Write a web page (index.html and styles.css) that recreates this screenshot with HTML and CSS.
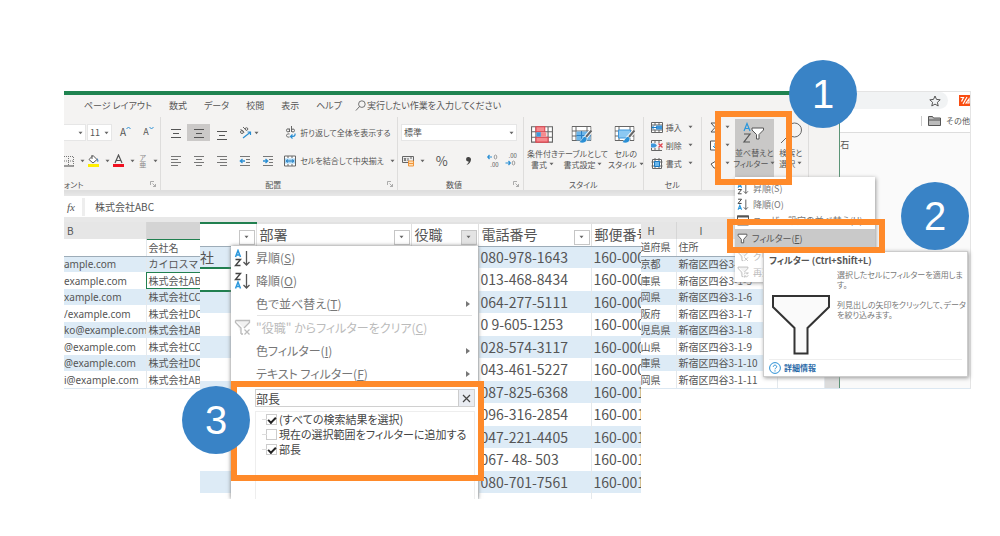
FILE: index.html
```html
<!DOCTYPE html>
<html lang="ja">
<head>
<meta charset="utf-8">
<title>フィルターの設定手順</title>
<link rel="stylesheet" href="styles.css">
</head>
<body>
<svg class="defs" aria-hidden="true">
  <symbol id="caret" viewBox="0 0 5 4"><path d="M.5 .8h4L2.5 3.3z" fill="#666"/></symbol>
  <symbol id="launch" viewBox="0 0 6 6"><path d="M.5 4V.5H4M2.5 2.5l3 3M5.5 3v2.5H3" fill="none" stroke="#999" stroke-width=".8"/></symbol>
  <symbol id="lines" viewBox="0 0 12 12"><path d="M1 2.500h10M3 6.500h6M1 10.500h10" stroke="#555" fill="none"/></symbol>
  <symbol id="left" viewBox="0 0 12 12"><path d="M1 1.500h10M1 4.500h7M1 7.500h10M1 10.500h7" stroke="#777" fill="none"/></symbol>
  <symbol id="center" viewBox="0 0 12 12"><path d="M1 1.500h10M3 4.500h6M1 7.500h10M3 10.500h6" stroke="#777" fill="none"/></symbol>
  <symbol id="right" viewBox="0 0 12 12"><path d="M1 1.500h10M4 4.500h7M1 7.500h10M4 10.500h7" stroke="#777" fill="none"/></symbol>
  <symbol id="outdent" viewBox="0 0 12 12"><path d="M1 1.500h10M7 4.500h4M7 7.500h4M1 10.500h10" stroke="#777" fill="none"/><path d="M6 6H1.500M3.500 4L1.300 6l2.200 2" stroke="#2a8fd4" fill="none" stroke-width="1.300"/></symbol>
  <symbol id="indent" viewBox="0 0 12 12"><path d="M1 1.500h10M7 4.500h4M7 7.500h4M1 10.500h10" stroke="#777" fill="none"/><path d="M1 6h4.500M3.500 4l2.200 2-2.200 2" stroke="#2a8fd4" fill="none" stroke-width="1.300"/></symbol>
  <symbol id="sortasc" viewBox="0 0 17 18"><path d="M1.500 8L4 1.500 6.500 8M2.300 6h3.400" stroke="#2a97dc" stroke-width="1.500" fill="none"/><path d="M1.500 10.500h5l-5 6h5" stroke="#444" stroke-width="1.400" fill="none"/><path d="M12.500 2v14M9.500 13l3 3 3-3" stroke="#555" stroke-width="1.300" fill="none"/></symbol>
  <symbol id="sortdesc" viewBox="0 0 17 18"><path d="M1.500 1.500h5l-5 6h5" stroke="#444" stroke-width="1.400" fill="none"/><path d="M1.500 16.500L4 10l2.500 6.500M2.300 14.500h3.400" stroke="#2a97dc" stroke-width="1.500" fill="none"/><path d="M12.500 2v14M9.500 13l3 3 3-3" stroke="#555" stroke-width="1.300" fill="none"/></symbol>
  <symbol id="funnel" viewBox="0 0 14 14"><path d="M1.500 1.500h11v2L8.500 8v4.500h-3V8l-4-4.500z" stroke="#555" fill="#fff" stroke-width="1.200"/></symbol>
  <symbol id="clear" viewBox="0 0 17 17"><path d="M1.500 1.500h14v2L10 9M7 15V9L1.500 3.500v-2M7 15h2" stroke="#bbb" fill="#f2f2f2" stroke-width="1.300"/><path d="M10.500 10.500l5 5M15.500 10.500l-5 5" stroke="#bbb" stroke-width="1.200"/></symbol>
  <symbol id="reapply" viewBox="0 0 17 17"><path d="M1.500 1.500h14v2L10 9M7 15V9L1.500 3.500v-2M7 15h2" stroke="#bbb" fill="#f2f2f2" stroke-width="1.300"/><path d="M10 12a3 3 0 0 1 5-1.500M15.500 8.500v2.500H13M16 13a3 3 0 0 1-5 1.500M10.500 16.500V14H13" stroke="#bbb" fill="none" stroke-width="1.100"/></symbol>
  <symbol id="find" viewBox="0 0 12 12"><circle cx="7.500" cy="4.500" r="3.600" fill="none" stroke="#666"/><path d="M5 7L1 11.500" stroke="#666"/></symbol>
  <symbol id="grid" viewBox="0 0 20 18"><path d="M.5 1.500h19v14H.5zM.5 6h19M.5 11h19M4.500 1.500v14M15.500 1.500v14" fill="#fff" stroke="#666"/></symbol>
  <symbol id="brush" viewBox="0 0 20 20"><path d="M18.500 5.500L12 13" stroke="#fff" stroke-width="4"/><path d="M18.500 5.500L12.500 12.500" stroke="#666" stroke-width="2"/><path d="M12.500 11.500c-3-.5-3.500 4-6.500 5.500 3 2 8 1 8-3.500z" fill="#2a8fd4" stroke="#fff" stroke-width=".6"/></symbol>
</svg>
<main class="canvas">
  <section class="shot">
    <div class="excel">
      <nav class="tabs">
        <a href="#">ページ レイアウト</a><a href="#">数式</a><a href="#">データ</a><a href="#">校閲</a><a href="#">表示</a><a href="#">ヘルプ</a>
        <a href="#" class="tell"><svg width="11" height="11"><use href="#find"/></svg>実行したい作業を入力してください</a>
      </nav>
      <div class="ribbon">
        <div class="group g-font">
          <div class="row">
            <button class="box stub" aria-label="フォント"><svg class="c"><use href="#caret"/></svg></button>
            <button class="box size">11<svg class="c"><use href="#caret"/></svg></button>
            <button class="tool big-a">A<svg width="5" height="4" viewBox="0 0 5 4"><path d="M.5 3L2.500 1l2 2" stroke="#2a8fd4" fill="none"/></svg></button>
            <button class="tool small-a">A<svg width="5" height="4" viewBox="0 0 5 4"><path d="M.5 1L2.500 3l2-2" stroke="#2a8fd4" fill="none"/></svg></button>
          </div>
          <div class="row">
            <button class="tool duo first" aria-label="罫線"><svg width="11" height="12" viewBox="0 0 11 12"><path d="M0 1.500h9.500v9M0 6h9.500M4.500 1v10" stroke="#777" stroke-dasharray="1 1" fill="none"/><path d="M0 11h10" stroke="#444"/></svg><svg class="c"><use href="#caret"/></svg></button>
            <button class="tool duo" aria-label="塗りつぶし"><svg width="13" height="13" viewBox="0 0 13 13"><path d="M2 5.500L6 1.500l4 4-4 3.500zM5 1v4" stroke="#555" fill="#fff"/><path d="M10 4c2 2 1.500 4 .5 4z" fill="#2a6fb4"/><path d="M1 10h11v3H1z" fill="#ffee00"/></svg><svg class="c"><use href="#caret"/></svg></button>
            <button class="tool duo" aria-label="文字色"><svg width="13" height="13" viewBox="0 0 13 13"><path d="M3 9l3.500-8L10 9M4.200 6.500h4.600" stroke="#555" fill="none" stroke-width="1.200"/><path d="M1 10h11v3H1z" fill="#f01020"/></svg><svg class="c"><use href="#caret"/></svg></button>
            <button class="tool duo ruby"><span>ア<br>亜</span><svg class="c"><use href="#caret"/></svg></button>
          </div>
          <div class="label">ォント<svg class="l"><use href="#launch"/></svg></div>
        </div>
        <div class="group g-align">
          <div class="row">
            <button class="tool" aria-label="上揃え"><svg width="12" height="12"><use href="#lines"/></svg></button>
            <button class="tool on" aria-label="中央揃え"><svg width="12" height="12"><use href="#lines"/></svg></button>
            <button class="tool low" aria-label="下揃え"><svg width="12" height="12"><use href="#lines"/></svg></button>
            <button class="tool turn" aria-label="方向"><svg width="13" height="13" viewBox="0 0 13 13"><circle cx="3" cy="6" r="1.500" stroke="#666" fill="none"/><path d="M1.500 3l3.500 3.500M4 1l3.500 3.500" stroke="#666"/><circle cx="7.500" cy="3" r="1.300" stroke="#666" fill="none"/><path d="M4 12l7-5.500M11.500 9V6H8.500" stroke="#2a8fd4" fill="none" stroke-width="1.200"/></svg><svg class="c"><use href="#caret"/></svg></button>
            <button class="tool wide wrap"><svg width="11" height="13" viewBox="0 0 11 13"><path d="M4.500 2.500v3.500M4.500 4.500a1.500 1.500 0 1 1-3-.2 1.500 1.500 0 0 1 3 0M6.500 0v6M6.500 4.500a1.500 1.500 0 1 0 3 0 1.500 1.500 0 0 0-3 0M4.500 8c-4-1-4 4 0 3" stroke="#666" fill="none"/><path d="M10 7.500c.5 3-1.500 3-4 3M7.500 8.500l-2 2 2 2" stroke="#2a8fd4" fill="none" stroke-width="1.200"/></svg>折り返して全体を表示する</button>
          </div>
          <div class="row">
            <button class="tool" aria-label="左揃え"><svg width="12" height="12"><use href="#left"/></svg></button>
            <button class="tool" aria-label="中央"><svg width="12" height="12"><use href="#center"/></svg></button>
            <button class="tool" aria-label="右揃え"><svg width="12" height="12"><use href="#right"/></svg></button>
            <button class="tool" aria-label="インデントを減らす"><svg width="12" height="12"><use href="#outdent"/></svg></button>
            <button class="tool" aria-label="インデントを増やす"><svg width="12" height="12"><use href="#indent"/></svg></button>
            <button class="tool wide"><svg width="12" height="12" viewBox="0 0 12 12"><path d="M.5 1h11v10H.5zM4 1v2M8 1v2M4 9v2M8 9v2" stroke="#666" fill="#fff"/><path d="M1 3.500h10v5H1z" fill="#a9d5f2"/><path d="M2 6h8M4 4.500L2.300 6 4 7.500M8 4.500L9.700 6 8 7.500" stroke="#1878c0" fill="none"/></svg>セルを結合して中央揃え<svg class="c far"><use href="#caret"/></svg></button>
          </div>
          <div class="label">配置<svg class="l"><use href="#launch"/></svg></div>
        </div>
        <div class="group g-num">
          <div class="row"><button class="box format">標準<svg class="c"><use href="#caret"/></svg></button></div>
          <div class="row spread">
            <button class="tool duo" aria-label="通貨"><svg width="13" height="12" viewBox="0 0 13 12"><path d="M.5 1.500h11v6H.5z" stroke="#666" fill="#eee"/><path d="M2 3l2 3M4 3L2 6M6 3v3M8 3h2" stroke="#666"/><path d="M6.500 6h5v5h-5zM6.500 8.500h5" stroke="#f0953a" fill="#ffe0b8"/></svg><svg class="c"><use href="#caret"/></svg></button>
            <button class="tool pct">%</button>
            <button class="tool pct comma" aria-label="桁区切り"><svg width="7" height="10" viewBox="0 0 7 10"><path d="M3.500 1a2.200 2.200 0 0 0-.5 4.400c.8 0 .8.300.5 1L1.500 9C4 8.500 6 6 6 3.500 6 2 5 1 3.500 1z" fill="#444"/></svg></button>
            <button class="tool dec">.00<svg width="11" height="12" viewBox="0 0 11 12"><path d="M5 3H.8M2.500 1L.8 3l1.700 2" stroke="#2a8fd4" fill="none" stroke-width="1.200"/><ellipse cx="8.500" cy="3" rx="1.300" ry="2" stroke="#888" fill="none" stroke-width=".8"/></svg></button>
            <button class="tool dec up">.00<svg width="11" height="12" viewBox="0 0 11 12"><path d="M.5 9h4.700M3.500 7l1.800 2-1.800 2" stroke="#2a8fd4" fill="none" stroke-width="1.200"/><ellipse cx="8.500" cy="9" rx="1.300" ry="2" stroke="#888" fill="none" stroke-width=".8"/></svg></button>
          </div>
          <div class="label">数値<svg class="l"><use href="#launch"/></svg></div>
        </div>
        <div class="group g-style">
          <div class="tall-row">
            <button class="tall"><svg width="22" height="20" viewBox="0 0 20 18"><use href="#grid" width="20" height="18"/><path d="M4.500 1.500h8V6h-8zM4.500 11h11v4.500h-11z" fill="#f58b8f" stroke="#e04550"/><path d="M5 6.500h4v4H5z" fill="#3d97dc"/><path d="M9 6.500h5v4H9z" fill="#f58b8f"/></svg><span>条件付き<br>書式 <svg class="c"><use href="#caret"/></svg></span></button>
            <button class="tall"><svg width="23" height="20" viewBox="0 0 22 20"><use href="#grid" width="20" height="18"/><path d="M5 6.500h14v9H5z" fill="#6cb6ea"/><path d="M5 10.500h14M10 6v9" stroke="#2a7fc4"/><use href="#brush" x="1" width="21" height="20"/></svg><span>テーブルとして<br>書式設定 <svg class="c"><use href="#caret"/></svg></span></button>
            <button class="tall"><svg width="23" height="20" viewBox="0 0 22 20"><use href="#grid" width="20" height="18"/><path d="M4 5h12v8H4z" fill="#8cc8f2" stroke="#3d97dc"/><use href="#brush" x="1" width="21" height="20"/></svg><span>セルの<br>スタイル <svg class="c"><use href="#caret"/></svg></span></button>
          </div>
          <div class="label">スタイル</div>
        </div>
        <div class="group g-cell">
          <div class="stack">
            <button class="item"><svg width="12" height="11" viewBox="0 0 12 11"><path d="M.5.5h11v10H.5zM.5 3h11M.5 8h11M4 .5V3M8 .5V3M4 8v2.500M8 8v2.500" stroke="#666" fill="#fff"/><path d="M5 3.500h6v4H5z" fill="#3d97dc"/><path d="M1 5.500h5M3 3.500l-2 2 2 2" stroke="#1878c0" fill="none"/></svg>挿入<svg class="c"><use href="#caret"/></svg></button>
            <button class="item"><svg width="12" height="11" viewBox="0 0 12 11"><path d="M11 .5H.5V3M.5 8v2.500H11M4 .5V3M4 8v2.500M8 8v2.500M8 .5V3" stroke="#666" fill="none"/><path d="M0 3.500h4l2 2-2 2H0z" fill="#3d97dc"/><path d="M7.500 3.500l4 4M11.500 3.500l-4 4" stroke="#e04550" stroke-width="1.300"/></svg>削除<svg class="c"><use href="#caret"/></svg></button>
            <button class="item"><svg width="12" height="11" viewBox="0 0 12 11"><path d="M1.500 1.500h9v9h-9zM.5 4h11M.5 8h11M4 0v11M8 0v11" stroke="#666" fill="#fff"/><path d="M3.500 3.500h5v5h-5z" fill="#6cb6ea" stroke="#1878c0"/></svg>書式<svg class="c"><use href="#caret"/></svg></button>
          </div>
          <div class="label">セル</div>
        </div>
        <div class="group g-edit">
          <div class="edit-row">
            <div class="stack sums">
              <button class="item" aria-label="合計"><svg width="9" height="11" viewBox="0 0 9 11"><path d="M8.500 1H1l4 4.500L1 10h7.500" stroke="#555" fill="none"/></svg><svg class="c"><use href="#caret"/></svg></button>
              <button class="item" aria-label="フィル"><svg width="9" height="11" viewBox="0 0 9 11"><path d="M8.500 1h-8v9h8" stroke="#555" fill="#fff"/><path d="M5 3v5M3 6l2 2 2-2" stroke="#2a8fd4" fill="none"/></svg><svg class="c"><use href="#caret"/></svg></button>
              <button class="item" aria-label="クリア"><svg width="9" height="11" viewBox="0 0 9 11"><path d="M8.500 1.500L1 6l3 4h4.500" stroke="#555" fill="#fff"/></svg><svg class="c"><use href="#caret"/></svg></button>
            </div>
            <button class="tall sort"><svg width="24" height="22" viewBox="0 0 24 22"><path d="M2 9L5 1.500 8 9M3 6.500h4" stroke="#2a97dc" fill="none" stroke-width="1.200"/><path d="M2 12h6l-6 8h6" stroke="#555" fill="none" stroke-width="1.200"/><path d="M10 6h11.500v2l-4.500 4.500V17h-2.500v-4.500L10 8z" stroke="#555" fill="#fff"/></svg><span>並べ替えと<br>フィルター <svg class="c"><use href="#caret"/></svg></span></button>
            <button class="tall seek"><svg width="24" height="22" viewBox="0 0 24 22"><circle cx="15.500" cy="8" r="7" stroke="#666" fill="none"/><path d="M10 13l-8 8" stroke="#666"/></svg><span>検索と<br>選択 <svg class="c"><use href="#caret"/></svg></span></button>
          </div>
        </div>
        <div class="group g-rest"></div>
      </div>
      <div class="formula"><i class="fx">fx</i><input aria-label="数式バー" value="株式会社ABC"></div>
      <div class="sheet">
        <table class="base">
          <colgroup><col class="k-b"><col class="k-c"><col class="k-h"><col class="k-i"><col></colgroup>
          <thead><tr><th>B</th><th class="picked"></th><th class="h">H</th><th class="i">I</th><th></th></tr></thead>
          <tbody>
            <tr class="names"><td></td><td>会社名</td><td>道府県</td><td>住所</td><td></td></tr>
            <tr><td>ample.com</td><td>カイロスマ</td><td>京都</td><td>新宿区四谷3-1-4</td><td></td></tr>
            <tr><td>example.com</td><td class="active">株式会社ABC</td><td>庫県</td><td>新宿区四谷3-1-5</td><td></td></tr>
            <tr><td>xample.com</td><td>株式会社CCC</td><td>岡県</td><td>新宿区四谷3-1-6</td><td></td></tr>
            <tr><td>/example.com</td><td>株式会社DCC</td><td>阪府</td><td>新宿区四谷3-1-7</td><td></td></tr>
            <tr><td>ko@example.com</td><td>株式会社ABC</td><td>児島県</td><td>新宿区四谷3-1-8</td><td></td></tr>
            <tr><td>@example.com</td><td>株式会社CCC</td><td>山県</td><td>新宿区四谷3-1-9</td><td></td></tr>
            <tr><td>@example.com</td><td>株式会社DCC</td><td>庫県</td><td>新宿区四谷3-1-10</td><td></td></tr>
            <tr><td>i@example.com</td><td>株式会社ABC</td><td>岡県</td><td>新宿区四谷3-1-11</td><td></td></tr>
          </tbody>
        </table>
        <div class="scroll"></div>
      </div>
    </div>
    <div class="browser">
      <div class="omni"><div class="pill"><svg width="12" height="12" viewBox="0 0 12 12"><path d="M6 1l1.500 3.400 3.700.4-2.800 2.500.8 3.700L6 9.100 2.800 11l.8-3.700L.8 4.800l3.700-.4z" stroke="#555" fill="none"/></svg></div><svg class="ext" width="11" height="11" viewBox="0 0 11 11"><path d="M0 0h11v11H0z" fill="#f94d12"/><path d="M1.500 2.500h3l-2 4M8 2L4 9M7 8l3-4v4z" stroke="#fff" fill="none" stroke-width="1.200"/></svg></div>
      <div class="marks"><svg width="13" height="10" viewBox="0 0 13 10"><path d="M.5 9.500V.5h4l1 1.500h7v7.500zM.5 4h12" stroke="#555" fill="#bbb"/></svg>その他</div>
      <div class="page">石</div>
    </div>
  </section>

  <section class="zoomed">
    <table class="contacts">
      <colgroup><col class="z-a"><col class="z-b"><col class="z-c"><col class="z-d"><col class="z-e"></colgroup>
      <thead><tr>
        <th class="picked"><button class="drop" aria-label="絞り込み"><svg class="c"><use href="#caret"/></svg></button></th>
        <th>部署<button class="drop" aria-label="部署の絞り込み"><svg class="c"><use href="#caret"/></svg></button></th>
        <th>役職<button class="drop open" aria-label="役職の絞り込み"><svg class="c"><use href="#caret"/></svg></button></th>
        <th>電話番号<button class="drop" aria-label="電話番号の絞り込み"><svg class="c"><use href="#caret"/></svg></button></th>
        <th>郵便番号</th></tr></thead>
      <tbody>
        <tr><td>社</td><td></td><td></td><td>080-978-1643</td><td>160-0004</td></tr>
        <tr><td class="active"></td><td></td><td></td><td>013-468-8434</td><td>160-0004</td></tr>
        <tr><td></td><td></td><td></td><td>064-277-5111</td><td>160-0004</td></tr>
        <tr><td></td><td></td><td></td><td>0 9-605-1253</td><td>160-0004</td></tr>
        <tr><td></td><td></td><td></td><td>028-574-3117</td><td>160-0004</td></tr>
        <tr><td></td><td></td><td></td><td>043-461-5227</td><td>160-0004</td></tr>
        <tr><td></td><td></td><td></td><td>087-825-6368</td><td>160-0015</td></tr>
        <tr><td></td><td></td><td></td><td>096-316-2854</td><td>160-0015</td></tr>
        <tr><td></td><td></td><td></td><td>047-221-4405</td><td>160-0015</td></tr>
        <tr><td></td><td></td><td></td><td>067- 48- 503</td><td>160-0015</td></tr>
        <tr><td></td><td></td><td></td><td>080-701-7561</td><td>160-0015</td></tr>
        <tr><td></td><td></td><td></td><td>087-65-8767</td><td>160-0015</td></tr>
      </tbody>
    </table>
    <div class="menu">
      <button><svg width="17" height="18"><use href="#sortasc"/></svg><span>昇順(<u>S</u>)</span></button>
      <button><svg width="17" height="18"><use href="#sortdesc"/></svg><span>降順(<u>O</u>)</span></button>
      <button><span>色で並べ替え(<u>T</u>)</span><i class="more"></i></button>
      <hr>
      <button disabled><svg width="17" height="17"><use href="#clear"/></svg><span>"役職" からフィルターをクリア(<u>C</u>)</span></button>
      <button><span>色フィルター(<u>I</u>)</span><i class="more"></i></button>
      <button><span>テキスト フィルター(<u>F</u>)</span><i class="more"></i></button>
      <div class="search"><input aria-label="検索" value="部長"><button aria-label="クリア"><svg width="9" height="9" viewBox="0 0 9 9"><path d="M1 1l7 7M8 1L1 8" stroke="#444" stroke-width="1.200"/></svg></button></div>
      <div class="tree">
        <label><input type="checkbox" checked>(すべての検索結果を選択)</label>
        <label><input type="checkbox">現在の選択範囲をフィルターに追加する</label>
        <label><input type="checkbox" checked>部長</label>
      </div>
    </div>
  </section>

  <div class="popup">
    <button><svg width="12" height="13"><use href="#sortasc"/></svg>昇順(S)</button>
    <button><svg width="12" height="13"><use href="#sortdesc"/></svg>降順(O)</button>
    <button><svg width="12" height="12" viewBox="0 0 12 12"><path d="M.5 2h11v9H.5z" stroke="#555" fill="#fff"/><path d="M0 2.500h12" stroke="#555" stroke-width="2"/></svg>ユーザー設定の並べ替え(U)...</button>
    <button class="hot"><svg width="11" height="11"><use href="#funnel"/></svg><span>フィルター(<u>F</u>)</span></button>
    <button disabled><svg width="12" height="12"><use href="#clear"/></svg>クリア(C)</button>
    <button disabled><svg width="12" height="12"><use href="#reapply"/></svg>再適用(Y)</button>
  </div>
  <div class="tip">
    <strong>フィルター (Ctrl+Shift+L)</strong>
    <div class="tip-body">
      <svg width="60" height="62" viewBox="0 0 60 62"><path d="M2 2h56v11L36.500 34v25.500h-13V34L2 13z" fill="#fafafa" stroke="#333" stroke-width="2"/></svg>
      <div><p>選択したセルにフィルターを適用しま<br>す。</p><p>列見出しの矢印をクリックして、データ<br>を絞り込みます。</p></div>
    </div>
    <a href="#"><svg width="12" height="12" viewBox="0 0 12 12"><circle cx="6" cy="6" r="5.400" fill="#fff" stroke="#2a8fd4"/><path d="M4.300 4.800c0-2.200 3.400-2.200 3.400 0 0 1.200-1.700 1.200-1.700 2.500M6 8.300v1.200" stroke="#2a8fd4" fill="none"/></svg>詳細情報</a>
  </div>

  <div class="frame f1"></div>
  <div class="frame f2"></div>
  <div class="frame f3"></div>
  <div class="step s1">1</div>
  <div class="step s2">2</div>
  <div class="step s3">3</div>
</main>
</body>
</html>
```
FILE: styles.css
```css
* { box-sizing: border-box; }
body { margin: 0; background: #fff; color: #555; font: 9px/11px "Noto Sans CJK JP", sans-serif; }
button, input { font: inherit; color: inherit; margin: 0; padding: 0; border: 0; background: none; border-radius: 0; }
a { color: inherit; text-decoration: none; }
svg { flex: none; display: block; }
.defs { position: absolute; width: 0; height: 0; }
.canvas { position: relative; min-height: 100vh; padding: 91px 29px 0 64px; }
.c { width: 5px; height: 4px; }
.l { width: 6px; height: 6px; }

.shot { display: flex; height: 298px; overflow: hidden; border-right: 1px solid #e4e4e4; border-bottom: 1px solid #dce8f2; }
.excel { flex: 777 1 0; min-width: 0; display: flex; flex-direction: column; background: #f4f3f2; border-top: 4px solid #1f8350; border-right: 1px solid #5b9477; overflow: hidden; }
.tabs { display: flex; gap: 17px; height: 22px; align-items: center; padding: 0 20px; white-space: nowrap; font-feature-settings: "palt"; }
.tell { display: flex; align-items: center; gap: 1px; margin-left: -4px; }

.ribbon { display: flex; height: 74px; font-feature-settings: "palt"; font-size: 8px; white-space: nowrap; }
.group { display: flex; flex-direction: column; border-right: 1px solid #dedddc; padding-top: 2px; min-width: 0; overflow: hidden; }
.g-font { flex: 98 1 0; }
.g-align { flex: 237 1 0; padding-left: 3px; }
.g-num { flex: 124 1 0; padding-left: 3px; }
.g-style { flex: 121 1 0; }
.g-cell { flex: 58 1 0; }
.g-edit { flex: 108 1 0; }
.g-rest { flex: 31 1 0; border: 0; }
.row { display: flex; align-items: center; height: 28px; }
.label { display: flex; justify-content: center; align-items: center; height: 12px; margin-top: auto; }
.label .l { margin-left: auto; margin-right: 4px; }
.g-font .label { justify-content: flex-start; }
.g-align .label { padding-left: 101px; }
.g-num .label { padding-left: 45px; }
.box { display: flex; align-items: center; justify-content: space-between; background: #fff; border: 1px solid #e6e6e6; height: 17px; padding: 0 2px; font-size: 9px; }
.stub { width: 22px; justify-content: flex-end; border-left: 0; }
.size { width: 25px; margin-left: 1px; }
.format { width: 116px; }
.tool { width: 23px; height: 17px; display: flex; align-items: center; justify-content: center; }
.big-a { font-size: 10px; align-items: flex-start; margin-left: 2px; padding-top: 2px; }
.small-a { font-size: 9px; align-items: flex-start; padding-top: 2px; }
.duo { width: 25px; gap: 5px; }
.duo.first { width: 22px; justify-content: flex-start; }
.ruby span { font-size: 7px; line-height: 7px; width: 10px; color: #888; }
.on { background: #cbc9c8; }
.low { align-items: flex-end; }
.turn { width: 32px; gap: 2px; }
.wide { width: auto; gap: 4px; margin-left: 5px; }
.wrap { margin-left: 20px; }
.far { margin-left: 2px; }
.spread { padding-right: 6px; justify-content: space-between; }
.pct { font-size: 13px; }
.dec { font-size: 6px; position: relative; align-items: flex-end; justify-content: flex-end; width: 14px; line-height: 8px; }
.dec svg { position: absolute; left: 2px; top: 2px; }
.dec.up { align-items: flex-start; }
.tall-row { display: flex; justify-content: space-between; padding: 6px 3px 0; }
.tall { display: flex; flex-direction: column; align-items: center; gap: 3px; line-height: 11px; }
.tall .c, .item .c { display: inline-block; vertical-align: 2px; }
.stack { display: flex; flex-direction: column; gap: 7px; padding: 3px 8px 0 7px; }
.item { display: flex; align-items: center; gap: 3px; height: 11px; }
.item .c { margin-left: auto; }
.edit-row { display: flex; }
.sums { width: 33px; padding: 3px 5px 0 8px; }
.sort { width: 39px; height: 58px; background: #c9c8c7; padding-top: 3px; }
.seek { width: 34px; padding-top: 3px; }

.formula { display: flex; align-items: center; height: 27px; padding-top: 6px; background: linear-gradient(#dedede 0 1px, #e8e8e8 6px, #fff 6px); }
.fx { width: 21px; padding-left: 3px; font: italic 11px/18px "Liberation Serif", serif; border-right: 3px solid #eee; }
.formula input { flex: 1; min-width: 0; height: 18px; padding-left: 10px; font-size: 10px; }
.sheet { display: flex; flex: 1; background: #e8e8e8; padding-top: 5px; }
.base { flex: 1; table-layout: fixed; border-collapse: collapse; font-size: 10px; line-height: 14px; width: 100%; height: 165px; }
.base th { height: 17px; padding: 0 3px; background: #e6e6e6; font-weight: 400; text-align: left; border-right: 1px solid #d6d6d6; }
.base th.h { padding-left: 7px; }
.base th.i { padding-left: 23px; }
.base th.picked { background: #d4d4d4; border-bottom: 1px solid #218050; }
.base td { height: 16px; padding: 0; background: #fff; white-space: nowrap; overflow: hidden; border-right: 1px solid #e4e9ed; }
.base td:first-child { font-family: "Noto Sans", sans-serif; }
.base td:nth-child(2), .base td:nth-child(4) { padding-left: 2px; }
.base tr:nth-child(odd) td { height: 17px; }
.base tr:nth-child(even) td { background: #ddebf6; }
.base .names td { border-bottom: 1px solid #9dacb8; }
.base td.active { outline: 1px solid #218050; outline-offset: -1px; }
.k-b { width: 82px; } .k-c { width: 494px; } .k-h { width: 36px; } .k-i { width: 101px; }
.scroll { width: 14px; background: #dcdcdc; }

.browser { flex: 130 1 0; min-width: 0; display: flex; flex-direction: column; background: #fff; border-top: 1px solid #e4e4e4; }
.omni { display: flex; align-items: center; justify-content: space-between; height: 17px; }
.pill { display: flex; align-items: center; justify-content: flex-end; width: 108px; height: 17px; padding-right: 7px; background: #f1f3f4; border-radius: 0 9px 9px 0; }
.marks { display: flex; align-items: center; justify-content: flex-end; gap: 5px; height: 24px; border-bottom: 1px solid #ddd; white-space: nowrap; font-size: 8px; }
.marks::before { content: ""; width: 1px; height: 10px; background: #ccc; margin-right: 1px; }
.page { flex: 1; background: #fafafa; padding-top: 6px; }

.zoomed { position: absolute; left: 200px; top: 222px; width: 441px; height: 277px; overflow: hidden; background: #e6e6e6; }
.contacts { table-layout: fixed; border-collapse: collapse; width: 441px; font-size: 14px; line-height: 16px; white-space: nowrap; }
.contacts th { position: relative; height: 23px; padding: 0 0 2px 3px; background: #fff; font-weight: 400; text-align: left; border-top: 2px solid #e2e2e2; border-right: 1px solid #e0e0e0; border-bottom: 1px solid #9dacb8; overflow: hidden; }
.contacts th.picked { border-top-color: #218050; }
.contacts td { height: 22px; padding: 0 0 1px 2px; background: #fff; overflow: hidden; border-right: 1px solid #e4e9ed; }
.contacts tr:nth-child(even) td { height: 23px; }
.contacts tbody tr:nth-child(odd) td { background: #ddebf6; }
.contacts td:first-child { padding: 0; }
.contacts td.active { border-top: 2px solid #218050; border-bottom: 2px solid #218050; }
.drop { position: absolute; right: 1px; bottom: 1px; width: 16px; height: 15px; display: flex; align-items: center; justify-content: center; background: #fff; border: 1px solid #c6c6c6; }
.drop.open { background: #e4e4e4; }
.z-a { width: 56px; } .z-b { width: 155px; } .z-c { width: 67px; } .z-d { width: 113px; } .z-e { width: 50px; }

.menu { position: absolute; left: 31px; top: 24px; width: 247px; height: 253px; background: #fff; box-shadow: 0 0 4px #777; font-size: 12px; font-feature-settings: "palt"; color: #777; }
.menu > button { position: relative; display: grid; grid-template-columns: 17px 1fr 5px; gap: 5px; align-items: center; width: 100%; height: 23px; padding: 0 7px 0 3px; text-align: left; }
.menu > button span { grid-column: 2; }
.menu > button:disabled { color: #bbb; }
.menu hr { height: 1px; margin: 0 6px 0 26px; border: 0; background: #e4e4e4; }
.more { grid-column: 3; border: 3px solid transparent; border-left: 4px solid #777; border-right: 0; }
.search { display: flex; height: 18px; margin: 4px 3px 0 24px; border: 1px solid #d0d0d0; color: #444; }
.search input { flex: 1; min-width: 0; }
.search button { width: 16px; display: flex; align-items: center; justify-content: center; background: #e9ecf2; border-left: 1px solid #ccc; }
.tree { margin: 4px 3px 0 24px; height: 90px; padding-left: 10px; border: 1px solid #eee; color: #444; font-size: 11px; }
.tree label { display: flex; align-items: center; height: 15px; gap: 2px; white-space: nowrap; }
.tree label::before { content: ""; position: absolute; left: 31px; width: 5px; border-top: 1px solid #ddd; }
.tree input { flex: none; appearance: none; width: 11px; height: 11px; border: 1px solid #ccc; background: #fff; display: grid; place-items: center; }
.tree input:checked::after { content: ""; width: 6px; height: 3px; border: solid #222; border-width: 0 0 2px 2px; transform: rotate(-45deg); }

.popup { position: absolute; left: 735px; top: 177px; width: 140px; height: 105px; padding-top: 3px; background: #fff; box-shadow: 1px 1px 4px #999; font-feature-settings: "palt"; color: #777; }
.popup button { display: flex; align-items: center; gap: 4px; width: 100%; height: 16px; padding-left: 2px; }
.popup .hot { height: 19px; margin-top: 1px; background: #c9c9c9; color: #555; }
.popup button:disabled { color: #bbb; }
.tip { position: absolute; left: 763px; top: 251px; width: 205px; height: 126px; padding: 4px 5px; background: #fff; border: 1px solid #ccc; box-shadow: 1px 1px 4px #999; font-size: 8px; line-height: 10px; font-feature-settings: "palt"; color: #777; white-space: nowrap; }
.tip strong { font-size: 9px; color: #555; }
.tip-body { display: grid; grid-template-columns: 68px 1fr; height: 94px; padding-top: 4px; border-bottom: 1px solid #eee; }
.tip-body svg { margin: 24px 0 0 2px; }
.tip p { margin: 0 0 10px; }
.tip a { display: flex; align-items: center; gap: 3px; height: 16px; color: #2a6aa8; font-weight: 700; }

.frame { position: absolute; border: 6px solid #ff8a2a; }
.f1 { left: 715px; top: 111px; width: 77px; height: 74px; }
.f2 { left: 727px; top: 219px; width: 158px; height: 34px; }
.f3 { left: 231px; top: 381px; width: 253px; height: 100px; }
.step { position: absolute; width: 68px; height: 68px; border-radius: 50%; background: #3983c6; color: #fff; font: 40px/68px "Liberation Sans", Arial, sans-serif; text-align: center; }
.s1 { left: 789px; top: 60px; }
.s2 { left: 901px; top: 182px; }
.s3 { left: 182px; top: 386px; }
```
